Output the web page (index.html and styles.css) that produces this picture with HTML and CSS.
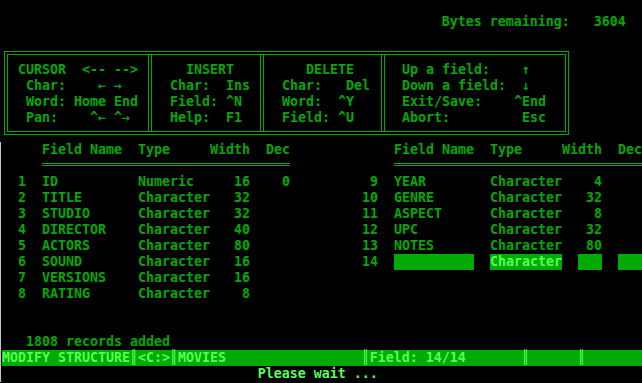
FILE: index.html
```html
<!DOCTYPE html>
<html lang="en">
<head>
  <meta charset="UTF-8">
  <title>dBASE - Modify Structure</title>
  <link rel="stylesheet" href="styles.css">
</head>
<body>
  <div class="screen">
    <div class="row">                                                       Bytes remaining:   3604</div>
    <div class="row"></div>

    <!-- help menu -->
    <div class="help">
      <div class="help-inner">
        <div class="panel panel-cursor">
          <div class="row">CURSOR  &lt;-- --&gt;</div>
          <div class="row"> Char:    ← →</div>
          <div class="row"> Word: Home End</div>
          <div class="row"> Pan:    ^← ^→</div>
        </div>
        <div class="panel panel-insert">
          <div class="row">  INSERT</div>
          <div class="row">Char:  Ins</div>
          <div class="row">Field: ^N</div>
          <div class="row">Help:  F1</div>
        </div>
        <div class="panel panel-delete">
          <div class="row">   DELETE</div>
          <div class="row">Char:   Del</div>
          <div class="row">Word:  ^Y</div>
          <div class="row">Field: ^U</div>
        </div>
        <div class="panel panel-keys">
          <div class="row">Up a field:    ↑</div>
          <div class="row">Down a field:  ↓</div>
          <div class="row">Exit/Save:    ^End</div>
          <div class="row">Abort:         Esc</div>
        </div>
      </div>
    </div>

    <div class="lower">
      <div class="fields">
        <div class="field-table">
          <div class="frow">
            <span></span><span></span><span>Field Name</span><span>Type</span><span class="r">Width</span><span></span><span class="r">Dec</span>
          </div>
          <div class="rule-row"><div class="rule"></div></div>
          <div class="frow"><span class="r">1</span><span></span><span>ID</span><span>Numeric</span><span class="r">16</span><span></span><span class="r">0</span></div>
          <div class="frow"><span class="r">2</span><span></span><span>TITLE</span><span>Character</span><span class="r">32</span></div>
          <div class="frow"><span class="r">3</span><span></span><span>STUDIO</span><span>Character</span><span class="r">32</span></div>
          <div class="frow"><span class="r">4</span><span></span><span>DIRECTOR</span><span>Character</span><span class="r">40</span></div>
          <div class="frow"><span class="r">5</span><span></span><span>ACTORS</span><span>Character</span><span class="r">80</span></div>
          <div class="frow"><span class="r">6</span><span></span><span>SOUND</span><span>Character</span><span class="r">16</span></div>
          <div class="frow"><span class="r">7</span><span></span><span>VERSIONS</span><span>Character</span><span class="r">16</span></div>
          <div class="frow"><span class="r">8</span><span></span><span>RATING</span><span>Character</span><span class="r">8</span></div>
        </div>
        <div class="field-table">
          <div class="frow">
            <span></span><span></span><span>Field Name</span><span>Type</span><span class="r">Width</span><span></span><span class="r">Dec</span>
          </div>
          <div class="rule-row"><div class="rule"></div></div>
          <div class="frow"><span class="r">9</span><span></span><span>YEAR</span><span>Character</span><span class="r">4</span></div>
          <div class="frow"><span class="r">10</span><span></span><span>GENRE</span><span>Character</span><span class="r">32</span></div>
          <div class="frow"><span class="r">11</span><span></span><span>ASPECT</span><span>Character</span><span class="r">8</span></div>
          <div class="frow"><span class="r">12</span><span></span><span>UPC</span><span>Character</span><span class="r">32</span></div>
          <div class="frow"><span class="r">13</span><span></span><span>NOTES</span><span>Character</span><span class="r">80</span></div>
          <div class="frow edit">
            <span class="r">14</span><span></span>
            <span><span class="hl name-box"></span></span>
            <span class="hl">Character</span>
            <span class="r"><span class="hl width-box"></span></span>
            <span></span>
            <span class="hl"></span>
          </div>
        </div>
      </div>
      <div class="row"></div>
      <div class="row"></div>
      <div class="row">   1808 records added</div>
      <div class="row status">MODIFY STRUCTURE║&lt;C:&gt;║MOVIES                 ║Field: 14/14       ║      ║</div>
      <div class="row bright">                                Please wait ...</div>
    </div>
  </div>
</body>
</html>
```

FILE: styles.css
```css
:root {
  --green: #00aa00;
  --bright: #55ff55;
  --cell: 8px;
}

* {
  margin: 0;
  padding: 0;
  box-sizing: border-box;
}

body {
  background: #000;
  width: 642px;
  height: 383px;
  overflow: hidden;
}

.screen {
  padding: 14px 0 0 2px;
  font-family: "DejaVu Sans Mono", monospace;
  font-weight: bold;
  font-size: 13.29px;
  color: var(--green);
}

.row {
  height: 16px;
  line-height: 16px;
  white-space: pre;
}

/* help box, rows 3-8 */
.help {
  width: 565px;
  height: 84px;
  margin: 5px 0 7px 2px;
  border: 1px solid var(--green);
  padding: 2px;
}

.help-inner {
  display: flex;
  gap: 2px;
  height: 78px;
  border: 1px solid var(--green);
}

.panel {
  padding-top: 7px;
}

.panel-cursor {
  width: 141px;
  padding-left: 10px;
  border-right: 1px solid var(--green);
}

.panel-insert {
  width: 110px;
  padding-left: 18px;
  border-left: 1px solid var(--green);
  border-right: 1px solid var(--green);
}

.panel-delete {
  width: 119px;
  padding-left: 18px;
  border-left: 1px solid var(--green);
  border-right: 1px solid var(--green);
}

.panel-keys {
  flex: 1;
  padding-left: 17px;
  border-left: 1px solid var(--green);
}

/* structure tables */
.lower {
  margin-left: -2px;
  padding-left: 1px;
  border-left: 1px solid #c4c4c4;
}

.fields {
  display: flex;
}

.field-table {
  width: 352px;
}

.field-table + .field-table {
  flex: 1;
}

.frow {
  display: grid;
  grid-template-columns: 24px 16px 96px 72px 40px 16px 24px;
  height: 16px;
  line-height: 16px;
  white-space: pre;
}

.r {
  text-align: right;
}

.rule-row {
  height: 16px;
  padding-top: 5px;
}

.rule {
  margin-left: 40px;
  width: 248px;
  border-top: 3px double var(--green);
}

.hl {
  background: var(--green);
  color: var(--bright);
}

.name-box {
  display: block;
  width: 80px;
  height: 16px;
}

.width-box {
  display: inline-block;
  width: 24px;
  height: 16px;
  vertical-align: top;
}

.status {
  background: var(--green);
  color: var(--bright);
}

.bright {
  color: var(--bright);
}
```
